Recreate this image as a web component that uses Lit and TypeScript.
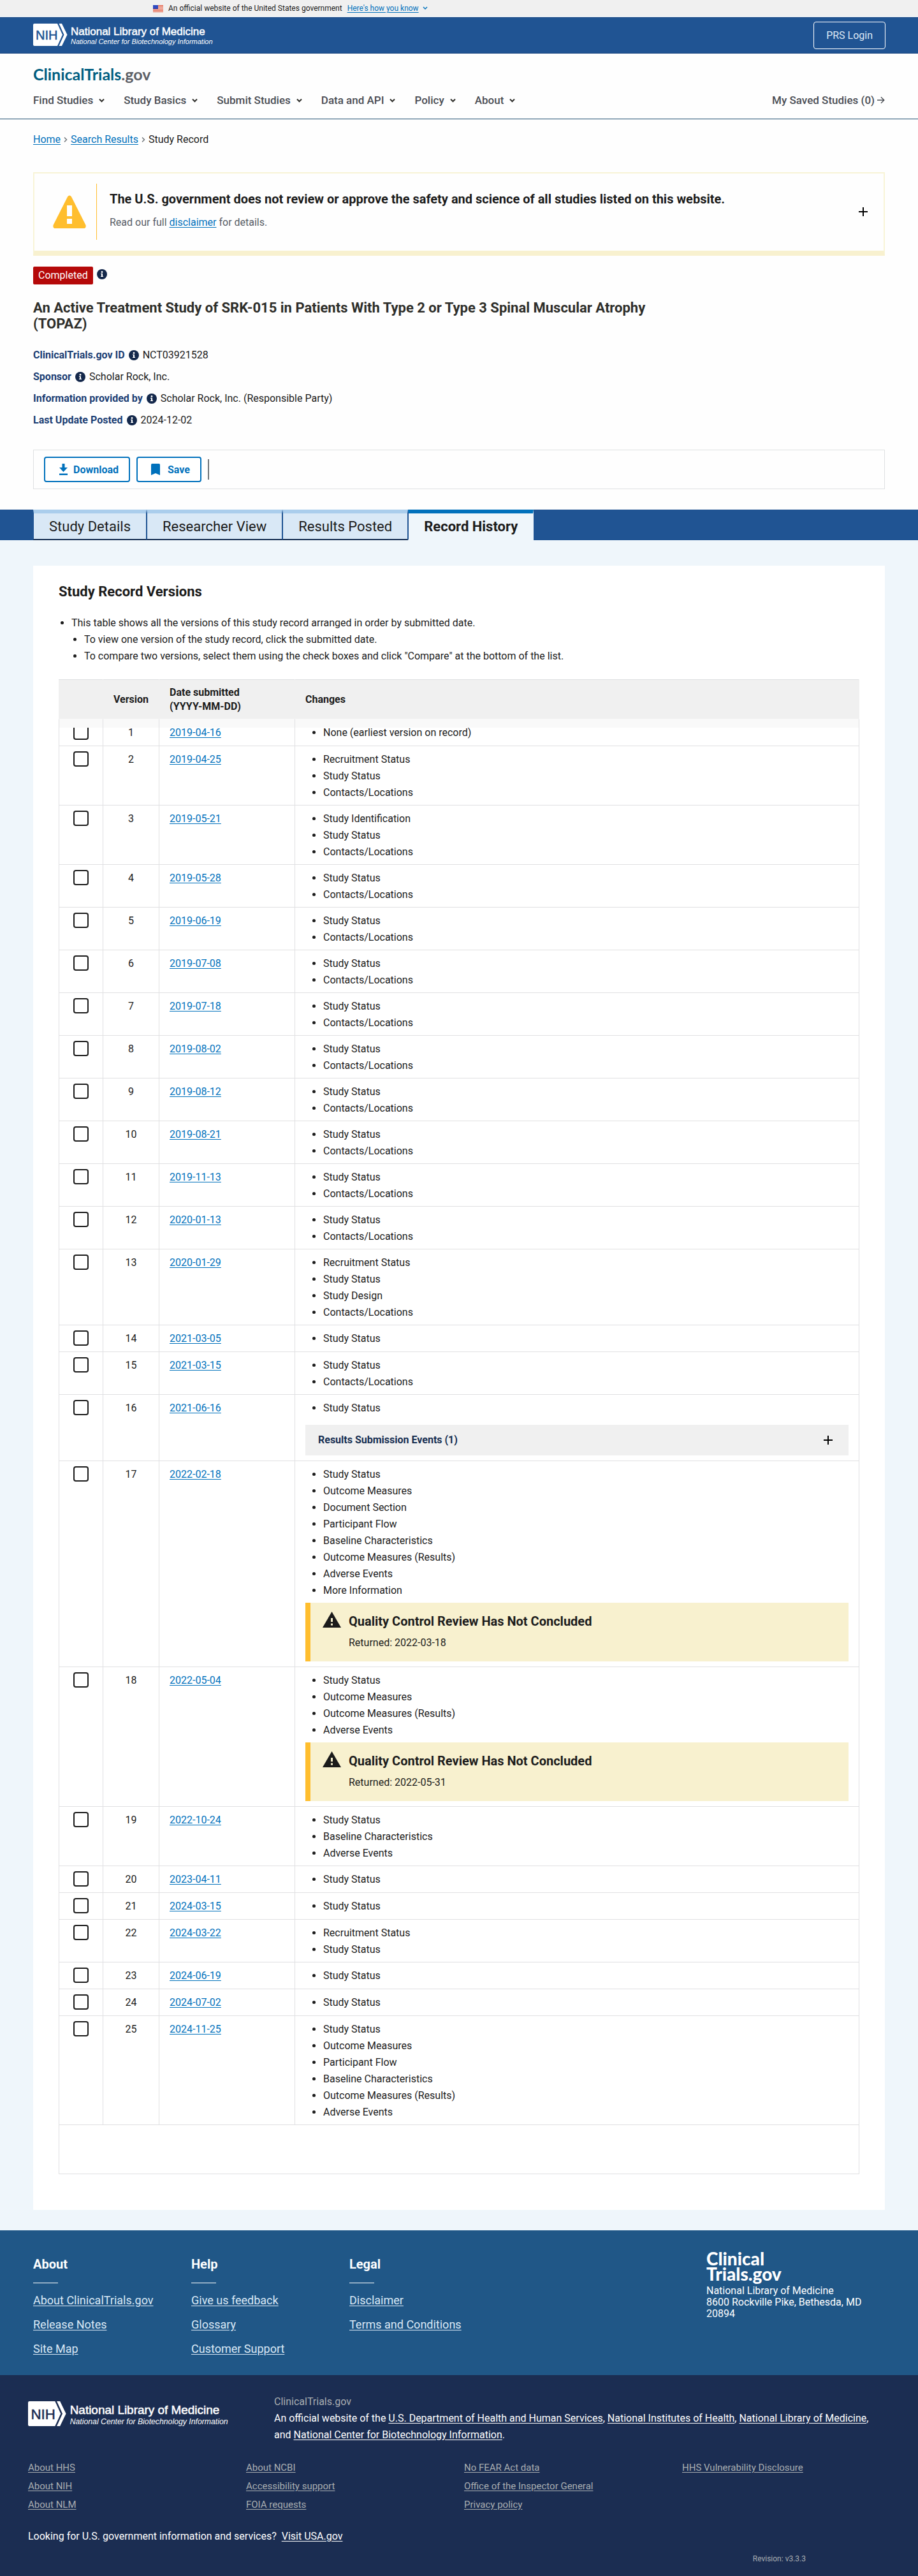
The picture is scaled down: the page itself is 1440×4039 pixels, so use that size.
import { LitElement, html, css, svg, nothing } from "lit";
import { customElement, property } from "lit/decorators.js";

interface Version {
  date: string;
  changes: string[];
  submissionEvents?: number;
  qcReturned?: string;
}

const RS = "Recruitment Status";
const SS = "Study Status";
const CL = "Contacts/Locations";
const OM = "Outcome Measures";
const OMR = "Outcome Measures (Results)";
const AE = "Adverse Events";
const BC = "Baseline Characteristics";
const PF = "Participant Flow";

const VERSIONS: Version[] = [
  { date: "2019-04-16", changes: ["None (earliest version on record)"] },
  { date: "2019-04-25", changes: [RS, SS, CL] },
  { date: "2019-05-21", changes: ["Study Identification", SS, CL] },
  { date: "2019-05-28", changes: [SS, CL] },
  { date: "2019-06-19", changes: [SS, CL] },
  { date: "2019-07-08", changes: [SS, CL] },
  { date: "2019-07-18", changes: [SS, CL] },
  { date: "2019-08-02", changes: [SS, CL] },
  { date: "2019-08-12", changes: [SS, CL] },
  { date: "2019-08-21", changes: [SS, CL] },
  { date: "2019-11-13", changes: [SS, CL] },
  { date: "2020-01-13", changes: [SS, CL] },
  { date: "2020-01-29", changes: [RS, SS, "Study Design", CL] },
  { date: "2021-03-05", changes: [SS] },
  { date: "2021-03-15", changes: [SS, CL] },
  { date: "2021-06-16", changes: [SS], submissionEvents: 1 },
  {
    date: "2022-02-18",
    changes: [SS, OM, "Document Section", PF, BC, OMR, AE, "More Information"],
    qcReturned: "2022-03-18",
  },
  { date: "2022-05-04", changes: [SS, OM, OMR, AE], qcReturned: "2022-05-31" },
  { date: "2022-10-24", changes: [SS, BC, AE] },
  { date: "2023-04-11", changes: [SS] },
  { date: "2024-03-15", changes: [SS] },
  { date: "2024-03-22", changes: [RS, SS] },
  { date: "2024-06-19", changes: [SS] },
  { date: "2024-07-02", changes: [SS] },
  { date: "2024-11-25", changes: [SS, OM, PF, BC, OMR, AE] },
];

const base = css`
  *,
  *::before,
  *::after {
    box-sizing: border-box;
  }
  h1,
  h2,
  h3,
  p,
  ul {
    margin: 0;
    padding: 0;
  }
  button {
    font: inherit;
    cursor: pointer;
  }
  a {
    color: #0071bc;
    text-underline-offset: 2px;
  }
  svg {
    display: block;
    flex: none;
  }
`;

const plusIcon = html`<svg width="14" height="14" viewBox="0 0 14 14" aria-hidden="true">
  <path d="M6 0h2v6h6v2H8v6H6V8H0V6h6z" fill="#000" />
</svg>`;

@customElement("nlm-logo")
class NlmLogo extends LitElement {
  @property({ type: Number }) height = 35;
  @property() ink = "#205493";
  static styles = css`
    :host {
      display: block;
      flex: none;
    }
    svg {
      display: block;
    }
    .mark {
      font: 400 20px "Liberation Sans", sans-serif;
    }
    .name {
      font: 400 17px "Liberation Sans", sans-serif;
      stroke: #fff;
      stroke-width: 0.5px;
    }
    .sub {
      font: italic 400 11px "Liberation Sans", sans-serif;
    }
  `;
  render() {
    return html`<svg
      width=${Math.round((this.height * 290) / 35)}
      height=${this.height}
      viewBox="0 0 290 35"
      role="img"
      aria-label="National Library of Medicine, National Center for Biotechnology Information"
    >
      ${svg`
        <path d="M2 0H38L46 17.500L38 35H2Q0 35 0 33V2Q0 0 2 0Z" fill="#fff" />
        <path d="M40.500 0H45L53.500 17.500L45 35H40.500L48.500 17.500Z" fill="#fff" />
        <text class="mark" x="4" y="25" fill=${this.ink} stroke=${this.ink} stroke-width="0.500">NIH</text>
        <text class="name" x="59" y="18" fill="#fff">National Library of Medicine</text>
        <text class="sub" x="59" y="32" fill="#fff">National Center for Biotechnology Information</text>
      `}
    </svg>`;
  }
}

@customElement("info-icon")
class InfoIcon extends LitElement {
  @property() label = "";
  static styles = [
    base,
    css`
      :host {
        display: inline-flex;
      }
      button {
        display: flex;
        padding: 0;
        border: 0;
        background: none;
      }
    `,
  ];
  render() {
    return html`<button type="button" aria-label="About ${this.label}">
      <svg width="16" height="16" viewBox="0 0 16 16" aria-hidden="true">
        <circle cx="8" cy="8" r="8" fill="#14284b" />
        <circle cx="8" cy="4.500" r="1.400" fill="#fff" />
        <path d="M6 6.800h3v4h1V12H6v-1.200h1V8H6z" fill="#fff" />
      </svg>
    </button>`;
  }
}

@customElement("site-header")
class SiteHeader extends LitElement {
  static styles = [
    base,
    css`
      :host {
        display: block;
      }
      .gov {
        display: flex;
        align-items: center;
        height: 27px;
        padding: 0 240px;
        background: #f0f0f0;
        border-bottom: 1px solid #dcebf7;
        font-size: 12px;
        color: #1b1b1b;
      }
      .flag {
        margin-right: 8px;
      }
      .how {
        display: flex;
        align-items: center;
        gap: 6px;
        margin-left: 8px;
        padding: 0;
        border: 0;
        background: none;
        color: #0071bc;
      }
      .how span {
        text-decoration: underline;
        text-underline-offset: 2px;
      }
      .nlm {
        display: flex;
        align-items: center;
        justify-content: space-between;
        height: 57px;
        padding: 0 51px 0 52px;
        background: #205493;
        border-top: 1px solid #1a4480;
        border-bottom: 1px solid #1a4480;
      }
      .nlm nlm-logo {
        margin-bottom: 2px;
      }
      .login {
        padding: 9px 19px;
        border: 1px solid #fff;
        border-radius: 4px;
        color: #dfe9f5;
        text-decoration: none;
        font-size: 16px;
        line-height: 23px;
      }
      .main {
        padding: 18px 52px;
        border-bottom: 1px solid #205072;
      }
      .brand {
        display: block;
        width: fit-content;
        font: 700 25px/28px Lato, sans-serif;
        color: #005d80;
        text-decoration: none;
      }
      .brand span {
        color: #5d6066;
      }
      nav {
        display: flex;
        justify-content: space-between;
        align-items: center;
        padding-top: 16px;
      }
      .menu {
        display: flex;
        gap: 30px;
        list-style: none;
      }
      .menu button,
      .saved {
        display: flex;
        align-items: center;
        padding: 0;
        border: 0;
        background: none;
        color: #4a4d54;
        font-size: 17px;
        line-height: 22px;
        font-weight: 500;
        text-decoration: none;
      }
      .menu button {
        gap: 9px;
      }
      .saved {
        gap: 4px;
      }
    `,
  ];
  render() {
    const menu = ["Find Studies", "Study Basics", "Submit Studies", "Data and API", "Policy", "About"];
    return html`
      <div class="gov">
        <svg class="flag" width="16" height="11" viewBox="0 0 16 11" aria-hidden="true">
          <rect width="16" height="11" fill="#fff" />
          <path d="M0 .5h16M0 2.500h16M0 4.500h16M0 6.500h16M0 8.500h16M0 10.500h16" stroke="#db3e1f" />
          <rect width="8" height="6" fill="#2f4ac0" />
        </svg>
        <span>An official website of the United States government</span>
        <button class="how" type="button">
          <span>Here's how you know</span>
          <svg width="8" height="6" viewBox="0 0 8 6" aria-hidden="true">
            <path d="M1 1l3 3 3-3" fill="none" stroke="#0071bc" stroke-width="1.500" />
          </svg>
        </button>
      </div>
      <div class="nlm">
        <nlm-logo></nlm-logo>
        <a class="login" href="#prs">PRS Login</a>
      </div>
      <div class="main">
        <a class="brand" href="#home">ClinicalTrials<span>.gov</span></a>
        <nav aria-label="Main">
          <ul class="menu">
            ${menu.map(
              (m) => html`<li>
                <button type="button">
                  ${m}
                  <svg width="9" height="7" viewBox="0 0 9 7" aria-hidden="true">
                    <path d="M1 1.500l3.500 3.500L8 1.500" fill="none" stroke="#2e2e2a" stroke-width="2" />
                  </svg>
                </button>
              </li>`
            )}
          </ul>
          <a class="saved" href="#saved">
            My Saved Studies (0)
            <svg width="12" height="12" viewBox="0 0 12 12" aria-hidden="true">
              <path d="M0 6h10.500M6 1.200L10.800 6 6 10.800" fill="none" stroke="#4a4d54" stroke-width="1.400" />
            </svg>
          </a>
        </nav>
      </div>
    `;
  }
}

@customElement("study-summary")
class StudySummary extends LitElement {
  static styles = [
    base,
    css`
      :host {
        display: block;
        padding: 20px 52px 32px;
        color: #1b1b1b;
      }
      .crumbs {
        display: flex;
        align-items: center;
        gap: 5px;
        font-size: 16px;
        line-height: 24px;
      }
      .disclaimer {
        display: flex;
        align-items: center;
        margin-top: 39px;
        padding: 16px 25px 17px 28px;
        border: 2px solid #f8f4d6;
        border-bottom: 8px solid #f8f1cf;
      }
      .warn {
        margin-right: 15px;
      }
      .copy {
        flex: 1;
        padding: 9px 20px 15px;
        border-left: 1px solid #ffbe2e;
      }
      .copy h2 {
        font-size: 20px;
        line-height: 30px;
        font-weight: 700;
      }
      .copy p {
        margin-top: 9px;
        font-size: 16px;
        line-height: 25px;
        color: #565c65;
      }
      .expand {
        display: flex;
        padding: 0;
        border: 0;
        background: none;
      }
      .status {
        display: flex;
        align-items: center;
        gap: 6px;
        margin-top: 17px;
      }
      .badge {
        padding: 2px 8px;
        border-radius: 2px;
        background: #b50909;
        color: #fff;
        font-size: 16px;
        line-height: 24px;
      }
      .status info-icon {
        margin-bottom: 4px;
      }
      h1 {
        max-width: 990px;
        margin-top: 24px;
        font-size: 22px;
        line-height: 25px;
        font-weight: 700;
        color: #2e2e2a;
      }
      .facts {
        display: grid;
        gap: 8px;
        margin: 24px 0 0;
      }
      .fact {
        display: flex;
        align-items: center;
        gap: 6px;
        font-size: 16px;
        line-height: 26px;
      }
      dt {
        display: flex;
        align-items: center;
        gap: 6px;
        font-weight: 700;
        color: #1a3d73;
      }
      dd {
        margin: 0;
      }
      .actions {
        display: flex;
        align-items: center;
        gap: 10px;
        margin-top: 33px;
        padding: 10px 16px;
        border: 1px solid #dfe1e2;
      }
      .actions button {
        display: flex;
        align-items: center;
        gap: 8px;
        height: 40px;
        padding: 0 16px 0 21px;
        border: 2px solid #0071bc;
        border-radius: 4px;
        background: #fff;
        color: #0071bc;
        font-size: 16px;
        font-weight: 700;
      }
      .actions .save {
        gap: 12px;
      }
      .bar {
        width: 2px;
        height: 32px;
        background: #71767a;
      }
    `,
  ];
  render() {
    const facts = [
      ["ClinicalTrials.gov ID", "NCT03921528"],
      ["Sponsor", "Scholar Rock, Inc."],
      ["Information provided by", "Scholar Rock, Inc. (Responsible Party)"],
      ["Last Update Posted", "2024-12-02"],
    ];
    const chevron = html`<svg width="6" height="10" viewBox="0 0 6 10" aria-hidden="true">
      <path d="M1 1.500L4.500 5 1 8.500" fill="none" stroke="#71767a" stroke-width="1.500" />
    </svg>`;
    return html`
      <nav class="crumbs" aria-label="Breadcrumb">
        <a href="#home">Home</a>${chevron}<a href="#results">Search Results</a>${chevron}
        <span>Study Record</span>
      </nav>
      <section class="disclaimer">
        <svg class="warn" width="54" height="54" viewBox="0 0 54 54" aria-hidden="true">
          <path
            d="M24 3.500Q27-.5 30 3.500L52.500 48Q53.500 53 49 53H5Q.5 53 1.500 48Z"
            fill="#ffbe2e"
          />
          <path d="M23 17h8v17h-8zM23 38h8v8h-8z" fill="#fff" />
        </svg>
        <div class="copy">
          <h2>
            The U.S. government does not review or approve the safety and science of all studies
            listed on this website.
          </h2>
          <p>Read our full <a href="#disclaimer">disclaimer</a> for details.</p>
        </div>
        <button class="expand" type="button" aria-label="Show more">${plusIcon}</button>
      </section>
      <div class="status">
        <span class="badge">Completed</span>
        <info-icon label="recruitment status"></info-icon>
      </div>
      <h1>
        An Active Treatment Study of SRK-015 in Patients With Type 2 or Type 3 Spinal Muscular
        Atrophy (TOPAZ)
      </h1>
      <dl class="facts">
        ${facts.map(
          ([k, v]) => html`<div class="fact">
            <dt>${k} <info-icon label=${k}></info-icon></dt>
            <dd>${v}</dd>
          </div>`
        )}
      </dl>
      <div class="actions">
        <button type="button">
          <svg width="15" height="18" viewBox="0 0 15 18" aria-hidden="true">
            <path d="M5.500 0h4v6H14l-6.500 7L1 6h4.500zM1 15.500h13V18H1z" fill="#0071bc" />
          </svg>
          Download
        </button>
        <button class="save" type="button">
          <svg width="14" height="18" viewBox="0 0 14 18" aria-hidden="true">
            <path d="M1.500 0h11Q14 0 14 2v16l-7-3-7 3V2Q0 0 1.500 0Z" fill="#0071bc" />
          </svg>
          Save
        </button>
        <span class="bar"></span>
      </div>
    `;
  }
}

@customElement("view-tabs")
class ViewTabs extends LitElement {
  static styles = [
    base,
    css`
      :host {
        display: flex;
        padding: 0 52px;
        background: #205493;
      }
      a {
        padding: 5px 24px 3px;
        border: 1px solid #205493;
        border-width: 0 1px;
        border-top: 6px solid #aacdec;
        border-bottom: 2px solid #162e51;
        background: #d9e8f6;
        color: #1b1b1b;
        text-decoration: none;
        font-size: 22px;
        line-height: 32px;
      }
      a.active {
        border-top-color: #0071bc;
        border-bottom-color: #eff6fb;
        border-right-color: #eff6fb;
        background: #eff6fb;
        font-weight: 700;
      }
    `,
  ];
  render() {
    return html`
      <a href="#details">Study Details</a>
      <a href="#researcher">Researcher View</a>
      <a href="#results">Results Posted</a>
      <a class="active" href="#history" aria-current="page">Record History</a>
    `;
  }
}

@customElement("version-history")
class VersionHistory extends LitElement {
  static styles = [
    base,
    css`
      :host {
        display: block;
        padding: 40px 52px 32px;
        background: #eff6fb;
        color: #1b1b1b;
        font-size: 16px;
        line-height: 26px;
      }
      .card {
        padding: 26px 40px 56px;
        background: #fff;
      }
      h2 {
        font-size: 22px;
        line-height: 30px;
        font-weight: 700;
      }
      .notes {
        margin: 21px 0 23px;
        padding-left: 20px;
      }
      .notes ul {
        padding-left: 20px;
        list-style: disc;
      }
      table {
        width: 100%;
        border-collapse: collapse;
        table-layout: fixed;
      }
      td,
      th {
        border: 1px solid #e0e0e2;
        padding: 8px 16px 6px;
        vertical-align: top;
        text-align: left;
      }
      thead th {
        position: relative;
        z-index: 1;
        height: 62px;
        padding: 0 16px;
        vertical-align: middle;
        line-height: 22px;
        font-weight: 700;
        background: #f0f0f0;
        border-color: #f0f0f0;
        border-top-color: #dfe1e2;
      }
      thead th::after {
        content: "";
        position: absolute;
        left: 0;
        right: 0;
        top: 100%;
        height: 14px;
        background: #f9f9f9;
      }
      .pick {
        width: 69px;
        padding: 8px 0 9px;
      }
      .num {
        width: 88px;
        padding-left: 8px;
        padding-right: 8px;
        text-align: center;
      }
      .date {
        width: 213px;
      }
      .pick input {
        display: block;
        appearance: none;
        width: 24px;
        height: 24px;
        margin: 0 auto;
        border: 2px solid #1b1b1b;
        border-radius: 4px;
        background: #fff;
      }
      .changes ul {
        padding-left: 28px;
      }
      .box {
        padding-bottom: 8px;
      }
      .events {
        display: flex;
        align-items: center;
        justify-content: space-between;
        width: 100%;
        height: 48px;
        margin-top: 13px;
        padding: 0 25px 0 20px;
        border: 0;
        background: #f0f0f0;
        color: #162e51;
        font-weight: 700;
      }
      .qc {
        display: flex;
        gap: 12px;
        height: 92px;
        margin-top: 6px;
        padding: 14px 19px;
        border-left: 8px solid #ffbe2e;
        background: #f8f1cf;
      }
      .qc h3 {
        font-size: 20px;
        line-height: 30px;
        font-weight: 700;
      }
      .qc p {
        margin-top: 6px;
      }
      .end {
        height: 77px;
      }
    `,
  ];
  private row(v: Version, i: number) {
    const n = i + 1;
    return html`<tr>
      <td class="pick"><input type="checkbox" aria-label="Select version ${n}" /></td>
      <td class="num">${n}</td>
      <td class="date"><a href="#version-${n}">${v.date}</a></td>
      <td class="changes ${v.qcReturned || v.submissionEvents ? "box" : ""}">
        <ul>
          ${v.changes.map((c) => html`<li>${c}</li>`)}
        </ul>
        ${v.submissionEvents
          ? html`<button class="events" type="button" aria-expanded="false">
              Results Submission Events (${v.submissionEvents}) ${plusIcon}
            </button>`
          : nothing}
        ${v.qcReturned
          ? html`<div class="qc">
              <svg width="29" height="25" viewBox="0 0 29 25" aria-hidden="true">
                <path d="M14.500 0L29 25H0z" fill="#1b1b1b" />
                <path d="M13 10h3v6h-3zM13 18.500h3v3h-3z" fill="#f8f1cf" />
              </svg>
              <div>
                <h3>Quality Control Review Has Not Concluded</h3>
                <p>Returned: ${v.qcReturned}</p>
              </div>
            </div>`
          : nothing}
      </td>
    </tr>`;
  }
  render() {
    return html`<div class="card">
      <h2>Study Record Versions</h2>
      <ul class="notes">
        <li>
          This table shows all the versions of this study record arranged in order by submitted
          date.
          <ul>
            <li>To view one version of the study record, click the submitted date.</li>
            <li>
              To compare two versions, select them using the check boxes and click "Compare" at the
              bottom of the list.
            </li>
          </ul>
        </li>
      </ul>
      <table>
        <thead>
          <tr>
            <th class="pick" aria-label="Select"></th>
            <th class="num">Version</th>
            <th class="date">Date submitted<br />(YYYY-MM-DD)</th>
            <th>Changes</th>
          </tr>
        </thead>
        <tbody>
          ${VERSIONS.map((v, i) => this.row(v, i))}
        </tbody>
        <tfoot>
          <tr>
            <td class="end" colspan="4"></td>
          </tr>
        </tfoot>
      </table>
    </div>`;
  }
}

@customElement("site-footer")
class SiteFooter extends LitElement {
  static styles = [
    base,
    css`
      :host {
        display: block;
        color: #fff;
        font-size: 16px;
      }
      a {
        color: inherit;
      }
      ul {
        list-style: none;
      }
      .top {
        display: grid;
        grid-template-columns: 248px 248px 1fr 280px;
        padding: 32px 52px 22px;
        background: #205787;
      }
      .col {
        padding-top: 8px;
      }
      .col h2 {
        font-size: 20px;
        line-height: 26px;
        font-weight: 700;
      }
      .col h2::after {
        content: "";
        display: block;
        width: 39px;
        height: 1px;
        margin: 16px 0 8px;
        background: #fff;
      }
      .col li {
        padding: 6px 0;
        font-size: 18px;
        line-height: 26px;
        color: #dbe9f6;
      }
      .brand {
        margin-bottom: 6px;
        font: 900 28px/24px Lato, sans-serif;
      }
      .org p {
        line-height: 18px;
      }
      .bottom {
        padding: 29px 44px 18px;
        background: #1b2d52;
      }
      .agency {
        display: flex;
        align-items: flex-start;
        gap: 63px;
        padding-right: 24px;
      }
      .agency nlm-logo {
        padding-top: 12px;
      }
      .agency p {
        line-height: 26px;
      }
      .agency .site {
        color: #a9aeb1;
      }
      .links {
        display: grid;
        grid-template-columns: repeat(4, 1fr);
        grid-template-rows: repeat(3, 29px);
        grid-auto-flow: column;
        margin-top: 24px;
        margin-right: -16px;
        font-size: 15px;
        line-height: 29px;
        color: #a9aeb1;
      }
      .usa {
        margin-top: 22px;
        line-height: 26px;
      }
      .usa a {
        margin-left: 4px;
      }
      .rev {
        margin: 13px 132px 0 0;
        text-align: right;
        font-size: 12px;
        line-height: 18px;
        color: #a9aeb1;
      }
    `,
  ];
  render() {
    const cols: [string, string[]][] = [
      ["About", ["About ClinicalTrials.gov", "Release Notes", "Site Map"]],
      ["Help", ["Give us feedback", "Glossary", "Customer Support"]],
      ["Legal", ["Disclaimer", "Terms and Conditions"]],
    ];
    const links = [
      "About HHS",
      "About NIH",
      "About NLM",
      "About NCBI",
      "Accessibility support",
      "FOIA requests",
      "No FEAR Act data",
      "Office of the Inspector General",
      "Privacy policy",
      "HHS Vulnerability Disclosure",
    ];
    return html`
      <div class="top">
        ${cols.map(
          ([title, items]) => html`<div class="col">
            <h2>${title}</h2>
            <ul>
              ${items.map((t) => html`<li><a href="#footer">${t}</a></li>`)}
            </ul>
          </div>`
        )}
        <div class="org">
          <div class="brand">Clinical<br />Trials.gov</div>
          <p>National Library of Medicine</p>
          <p>8600 Rockville Pike, Bethesda, MD<br />20894</p>
        </div>
      </div>
      <div class="bottom">
        <div class="agency">
          <nlm-logo height="39" ink="#1b2d52"></nlm-logo>
          <div>
            <p class="site">ClinicalTrials.gov</p>
            <p>
              An official website of the
              <a href="#hhs">U.S. Department of Health and Human Services</a>,
              <a href="#nih">National Institutes of Health</a>,
              <a href="#nlm">National Library of Medicine</a><span>,</span>
              <span>and</span>
              <a href="#ncbi">National Center for Biotechnology Information</a>.
            </p>
          </div>
        </div>
        <ul class="links">
          ${links.map((t) => html`<li><a href="#agency">${t}</a></li>`)}
        </ul>
        <p class="usa">
          Looking for U.S. government information and services?
          <a href="#usa">Visit USA.gov</a>
        </p>
        <p class="rev">Revision: v3.3.3</p>
      </div>
    `;
  }
}

@customElement("app-root")
class AppRoot extends LitElement {
  static styles = css`
    :host {
      display: block;
      background: #fefefe;
      font-family: Roboto, "Liberation Sans", sans-serif;
    }
  `;
  render() {
    return html`
      <site-header></site-header>
      <main>
        <study-summary></study-summary>
        <view-tabs></view-tabs>
        <version-history></version-history>
      </main>
      <site-footer></site-footer>
    `;
  }
}
